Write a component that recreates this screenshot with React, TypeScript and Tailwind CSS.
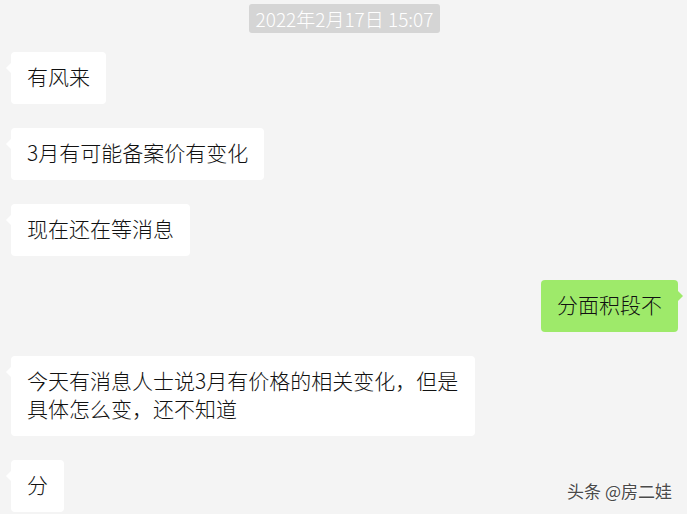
import React from 'react';

type Msg = { from: 'them' | 'me'; text: string };

const messages: Msg[] = [
  { from: 'them', text: '有风来' },
  { from: 'them', text: '3月有可能备案价有变化' },
  { from: 'them', text: '现在还在等消息' },
  { from: 'me', text: '分面积段不' },
  { from: 'them', text: '今天有消息人士说3月有价格的相关变化，但是具体怎么变，还不知道' },
  { from: 'them', text: '分' },
];

const Bubble: React.FC<{ msg: Msg }> = ({ msg }) => {
  const mine = msg.from === 'me';
  return (
    <div className={`flex ${mine ? 'justify-end' : 'justify-start'}`}>
      <div
        className={`relative max-w-[464px] rounded-[4px] px-4 pt-[10px] pb-[14px] text-[21px] font-light leading-[28px] text-[#111] ${
          mine ? 'bg-[#9eea6a]' : 'bg-white'
        }`}
      >
        {/* tail */}
        <span
          className={`absolute top-[11px] h-0 w-0 border-y-[5px] border-y-transparent ${
            mine
              ? 'right-[-5px] border-l-[5px] border-l-[#9eea6a]'
              : 'left-[-5px] border-r-[5px] border-r-white'
          }`}
        />
        {msg.text}
      </div>
    </div>
  );
};

export default function App() {
  return (
    <div
      className="relative h-[514px] w-[687px] overflow-hidden bg-[#f4f4f4]"
      style={{ fontFamily: '"Noto Sans CJK SC", "Noto Sans", sans-serif' }}
    >
      <div className="flex flex-col pl-[11px] pr-[9px] pt-[4px]">
        <div className="flex justify-center">
          <span className="rounded-[3px] bg-[#d5d5d5] px-[7px] text-[19px] font-light leading-[29px] text-white">
            2022年2月17日 15:07
          </span>
        </div>
        <div className="mt-[19px] flex flex-col gap-6">
          {messages.map((m, i) => (
            <Bubble key={i} msg={m} />
          ))}
        </div>
      </div>

      {/* watermark */}
      <div className="absolute bottom-[12px] right-[15px] text-[17px] leading-[22px] text-[#4a4a4a] [text-shadow:0_0_2px_#fff,0_0_2px_#fff]">
        头条 @房二娃
      </div>
    </div>
  );
}
